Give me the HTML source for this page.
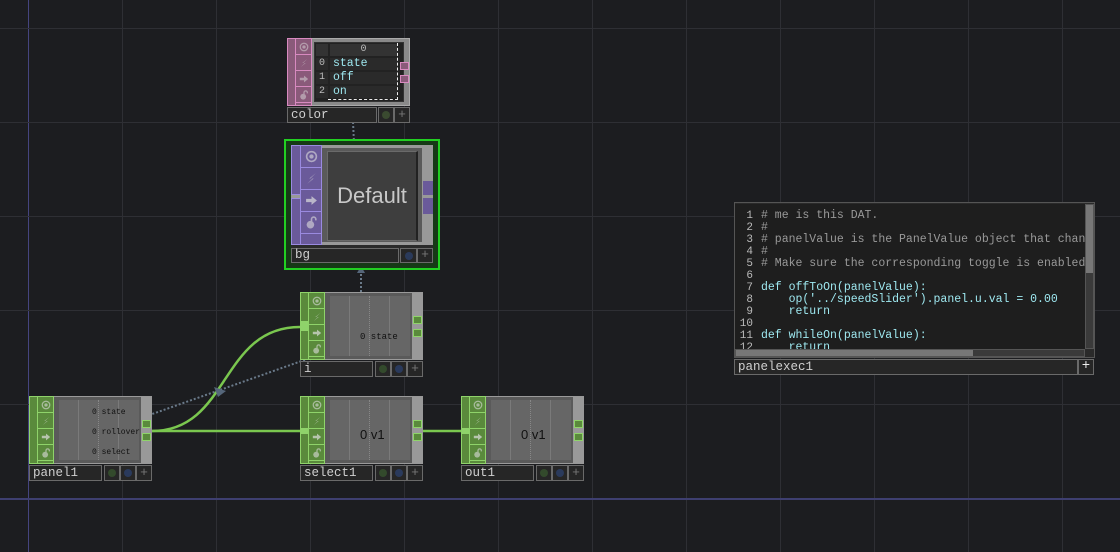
<!DOCTYPE html>
<html><head><meta charset="utf-8">
<style>
*{box-sizing:border-box;margin:0;padding:0}
body{width:1120px;height:552px;overflow:hidden;background:#1c1d20;position:relative;font-family:"Liberation Mono","DejaVu Sans Mono",monospace}
.gv{position:absolute;top:0;width:1px;height:552px;background:#2e2f34}
.gh{position:absolute;left:0;height:1px;width:1120px;background:#2e2f34}
.n{position:absolute;width:123px;height:86px}
.b{position:absolute;left:0;top:0;width:123px;height:68px;background:#5a5a5a;border:1px solid #9a9a9a}
.st{position:absolute;left:0;top:0;width:9px;height:68px;background:#5a8a3c;border:1px solid #8fd36a}
.ic{position:absolute;left:8px;top:0;width:17px;height:68px;background:#5a8a3c;border:1px solid #8fd36a}
.ic div{height:16px;border-bottom:1px solid #8fd36a;display:flex;align-items:center;justify-content:center}
.vw{position:absolute;left:30px;top:4px;width:80px;height:60px;background:#666}
.rs{position:absolute;left:112px;top:0;width:11px;height:68px;background:#999}
.con{position:absolute;left:113px;width:9px;height:8px;background:#5a8a3c;border:1px solid #8fd36a}
.lb{position:absolute;left:0;top:69px;width:73px;height:16px;background:#262626;border:1px solid #6a6a6a;color:#d0d0d0;font-size:12.5px;line-height:14px;padding-left:3px}
.bt{position:absolute;top:69px;width:16px;height:16px;background:#262626;border:1px solid #6a6a6a;color:#777;font-size:13px;line-height:13px;text-align:center}
.bt i{position:absolute;left:3px;top:3px;width:8px;height:8px;border-radius:50%}
.vl{position:absolute;top:0;width:1px;height:60px;background:#7a7a7a}
.dl{position:absolute;top:0;width:0;height:60px;border-left:1px dotted #888}
.txt{position:absolute;color:#111;font-size:8px;white-space:nowrap}
</style></head><body>
<svg width="0" height="0" style="position:absolute">
<defs>
<symbol id="i1" viewBox="0 0 12 12"><circle cx="6" cy="6" r="4.5" fill="none" stroke="#ddd" stroke-width="1.5"/><circle cx="6" cy="6" r="2" fill="#ddd"/></symbol>
<symbol id="i2" viewBox="0 0 12 12"><path d="M10 1 L4 6 L7 6 L2 11 L8 6 L5 6 Z" fill="#ddd"/></symbol>
<symbol id="i3" viewBox="0 0 12 12"><path d="M1 4.5 H6 V2 L11 6 L6 10 V7.5 H1 Z" fill="#ddd"/></symbol>
<symbol id="i4" viewBox="0 0 12 12"><circle cx="5" cy="8" r="3.5" fill="#ddd"/><path d="M6 5 V3 A2 2 0 0 1 10 3 V4" fill="none" stroke="#ddd" stroke-width="1.5"/></symbol>
</defs></svg>

<div class="gv" style="left:28px;background:#45457f"></div>
<div class="gv" style="left:122px"></div><div class="gv" style="left:216px"></div><div class="gv" style="left:310px"></div><div class="gv" style="left:404px"></div><div class="gv" style="left:498px"></div><div class="gv" style="left:592px"></div><div class="gv" style="left:686px"></div><div class="gv" style="left:780px"></div><div class="gv" style="left:874px"></div><div class="gv" style="left:968px"></div><div class="gv" style="left:1062px"></div>
<div class="gh" style="top:28px"></div><div class="gh" style="top:122px"></div><div class="gh" style="top:216px"></div><div class="gh" style="top:310px"></div><div class="gh" style="top:404px"></div><div class="gh" style="top:498px;height:2px;background:#3e3f70"></div>

<svg style="position:absolute;left:0;top:0" width="1120" height="552">
<path d="M152 431 L300 431" stroke="#7ac74f" stroke-width="2.5" fill="none"/>
<path d="M422 431 L461 431" stroke="#7ac74f" stroke-width="2.5" fill="none"/>
<path d="M152 431 C230 431, 220 327, 300 327" stroke="#7ac74f" stroke-width="2.5" fill="none"/>
<path d="M141 418 L310 358" stroke="#6a7a8a" stroke-width="2" stroke-dasharray="2 2" fill="none"/>
<path d="M214 387 L226 391 L218 397 Z" fill="#55667a"/>
<path d="M353 122 L354 143" stroke="#6a7a8a" stroke-width="2" stroke-dasharray="2 2" fill="none"/>
<path d="M349 139 L358 139 L354 146 Z" fill="#55667a"/>
<path d="M361 262 L361 292" stroke="#6a7a8a" stroke-width="2" stroke-dasharray="2 2" fill="none"/>
<path d="M357 273 L365 273 L361 266 Z" fill="#55667a"/>
</svg>

<!-- color DAT -->
<div class="n" style="left:287px;top:38px">
 <div class="b" style="height:68px;background:#8a8a8a;border-color:#aaa"></div>
 <div class="st" style="background:#8a5a7a;border-color:#d88ac0"></div>
 <div class="ic" style="background:#8a5a7a;border-color:#d88ac0"><div style="border-color:#d88ac0"><svg width="10" height="10" style="opacity:.5"><use href="#i1"/></svg></div><div style="border-color:#d88ac0"><svg width="10" height="10" style="opacity:.5"><use href="#i2"/></svg></div><div style="border-color:#d88ac0"><svg width="10" height="10" style="opacity:.5"><use href="#i3"/></svg></div><div style="border-color:#d88ac0"><svg width="10" height="10" style="opacity:.5"><use href="#i4"/></svg></div></div>
 <div style="position:absolute;left:27px;top:4px;width:90px;height:60px;background:#222;border:1px solid #333"></div>
 <div style="position:absolute;left:29px;top:6px;width:12px;height:12px;background:#333"></div>
 <div style="position:absolute;left:43px;top:6px;width:67px;height:12px;background:#333;color:#bbb;font-size:10px;text-align:center;line-height:12px">0</div>
 <div style="position:absolute;left:29px;top:20px;width:12px;height:12px;background:#2a2a2a;color:#bbb;font-size:10px;text-align:center;line-height:12px">0</div>
 <div style="position:absolute;left:43px;top:20px;width:67px;height:12px;background:#2a2a2a;color:#9ee8f0;font-size:11.5px;line-height:12px;padding-left:3px">state</div>
 <div style="position:absolute;left:29px;top:34px;width:12px;height:12px;background:#2a2a2a;color:#bbb;font-size:10px;text-align:center;line-height:12px">1</div>
 <div style="position:absolute;left:43px;top:34px;width:67px;height:12px;background:#2a2a2a;color:#9ee8f0;font-size:11.5px;line-height:12px;padding-left:3px">off</div>
 <div style="position:absolute;left:29px;top:48px;width:12px;height:12px;background:#2a2a2a;color:#bbb;font-size:10px;text-align:center;line-height:12px">2</div>
 <div style="position:absolute;left:43px;top:48px;width:67px;height:12px;background:#2a2a2a;color:#9ee8f0;font-size:11.5px;line-height:12px;padding-left:3px">on</div>
 <div style="position:absolute;left:41px;top:61px;width:70px;height:0;border-top:1px dashed #eee"></div>
 <div style="position:absolute;left:110px;top:5px;height:57px;width:0;border-left:1px dashed #eee"></div>
 <div class="con" style="top:24px;background:#8a5a7a;border-color:#d88ac0"></div>
 <div class="con" style="top:37px;background:#8a5a7a;border-color:#d88ac0"></div>
 <div class="lb" style="top:69px;width:90px">color</div>
 <div class="bt" style="left:91px"><i style="background:#3a4a30"></i></div>
 <div class="bt" style="left:107px">+</div>
</div>

<!-- bg COMP selected -->
<div style="position:absolute;left:284px;top:139px;width:156px;height:131px;border:2px solid #22d022;background:#163a16"></div>
<div style="position:absolute;left:291px;top:145px;width:142px;height:118px;background:#2a2a2a"></div>
<div style="position:absolute;left:291px;top:145px;width:142px;height:100px;background:#999"></div>
<div style="position:absolute;left:291px;top:145px;width:10px;height:50px;background:#6a5a9a;border:1px solid #9a8ae0"></div>
<div style="position:absolute;left:291px;top:198px;width:10px;height:47px;background:#6a5a9a;border:1px solid #9a8ae0"></div>
<div style="position:absolute;left:300px;top:145px;width:22px;height:100px;background:#6a5a9a;border:1px solid #9a8ae0">
 <div style="height:22px;border-bottom:1px solid #9a8ae0;display:flex;align-items:center;justify-content:center"><svg width="13" height="13" style="opacity:.6"><use href="#i1"/></svg></div>
 <div style="height:22px;border-bottom:1px solid #9a8ae0;display:flex;align-items:center;justify-content:center"><svg width="13" height="13" style="opacity:.6"><use href="#i2"/></svg></div>
 <div style="height:22px;border-bottom:1px solid #9a8ae0;display:flex;align-items:center;justify-content:center"><svg width="13" height="13" style="opacity:.7"><use href="#i3"/></svg></div>
 <div style="height:22px;border-bottom:1px solid #9a8ae0;display:flex;align-items:center;justify-content:center"><svg width="13" height="13" style="opacity:.6"><use href="#i4"/></svg></div>
</div>
<div style="position:absolute;left:322px;top:148px;width:100px;height:94px;background:#5a5a5a"></div>
<div style="position:absolute;left:327px;top:151px;width:91px;height:90px;background:#3e3e3e;border:1px solid #6a6a6a;border-right:2px solid #222;color:#c8c8c8;font-family:'Liberation Sans',sans-serif;font-size:22px;line-height:88px;text-align:center">Default</div>
<div style="position:absolute;left:423px;top:181px;width:10px;height:14px;background:#6a5a9a"></div>
<div style="position:absolute;left:423px;top:198px;width:10px;height:16px;background:#6a5a9a"></div>
<div style="position:absolute;left:291px;top:248px;width:108px;height:15px;background:#262626;border:1px solid #6a6a6a;color:#d0d0d0;font-size:12.5px;line-height:13px;padding-left:3px">bg</div>
<div style="position:absolute;left:400px;top:248px;width:17px;height:15px;background:#262626;border:1px solid #6a6a6a"><i style="position:absolute;left:4px;top:3px;width:8px;height:8px;border-radius:50%;background:#2a3a5a"></i></div>
<div style="position:absolute;left:417px;top:248px;width:16px;height:15px;background:#262626;border:1px solid #6a6a6a;color:#777;font-size:13px;line-height:12px;text-align:center">+</div>

<!-- i CHOP -->
<div class="n" style="left:300px;top:292px">
 <div class="b"></div><div class="st"></div>
 <div class="ic"><div><svg width="10" height="10" style="opacity:.6"><use href="#i1"/></svg></div><div><svg width="10" height="10" style="opacity:.6"><use href="#i2"/></svg></div><div><svg width="10" height="10" style="opacity:.7"><use href="#i3"/></svg></div><div><svg width="10" height="10" style="opacity:.6"><use href="#i4"/></svg></div></div>
 <div style="position:absolute;left:0;top:29px;width:9px;height:10px;background:#8fd36a"></div>
 <div class="vw"><div class="vl" style="left:19px"></div><div class="dl" style="left:39px"></div><div class="vl" style="left:59px"></div><div class="txt" style="left:30px;top:36px;font-size:9px">0 state</div></div>
 <div class="rs"></div><div class="con" style="top:24px"></div><div class="con" style="top:37px"></div>
 <div class="lb">i</div>
 <div class="bt" style="left:75px"><i style="background:#334a2c"></i></div><div class="bt" style="left:91px"><i style="background:#2a3a5c"></i></div><div class="bt" style="left:107px">+</div>
</div>

<!-- panel1 -->
<div class="n" style="left:29px;top:396px">
 <div class="b"></div><div class="st"></div>
 <div class="ic"><div><svg width="10" height="10" style="opacity:.6"><use href="#i1"/></svg></div><div><svg width="10" height="10" style="opacity:.6"><use href="#i2"/></svg></div><div><svg width="10" height="10" style="opacity:.7"><use href="#i3"/></svg></div><div><svg width="10" height="10" style="opacity:.6"><use href="#i4"/></svg></div></div>
 <div class="vw"><div class="vl" style="left:19px"></div><div class="dl" style="left:39px"></div><div class="vl" style="left:59px"></div>
 <div class="txt" style="left:33px;top:8px">0 state</div><div class="txt" style="left:33px;top:28px">0 rollover</div><div class="txt" style="left:33px;top:48px">0 select</div></div>
 <div class="rs"></div><div class="con" style="top:24px"></div><div class="con" style="top:37px"></div>
 <div class="lb">panel1</div>
 <div class="bt" style="left:75px"><i style="background:#334a2c"></i></div><div class="bt" style="left:91px"><i style="background:#2a3a5c"></i></div><div class="bt" style="left:107px">+</div>
</div>

<!-- select1 -->
<div class="n" style="left:300px;top:396px">
 <div class="b"></div><div class="st"></div>
 <div class="ic"><div><svg width="10" height="10" style="opacity:.6"><use href="#i1"/></svg></div><div><svg width="10" height="10" style="opacity:.6"><use href="#i2"/></svg></div><div><svg width="10" height="10" style="opacity:.7"><use href="#i3"/></svg></div><div><svg width="10" height="10" style="opacity:.6"><use href="#i4"/></svg></div></div>
 <div style="position:absolute;left:0;top:32px;width:9px;height:6px;background:#8fd36a"></div>
 <div class="vw"><div class="vl" style="left:19px"></div><div class="dl" style="left:39px"></div><div class="vl" style="left:59px"></div><div class="txt" style="left:30px;top:27px;font-size:13px;font-family:'Liberation Sans',sans-serif">0 v1</div></div>
 <div class="rs"></div><div class="con" style="top:24px"></div><div class="con" style="top:37px"></div>
 <div class="lb">select1</div>
 <div class="bt" style="left:75px"><i style="background:#334a2c"></i></div><div class="bt" style="left:91px"><i style="background:#2a3a5c"></i></div><div class="bt" style="left:107px">+</div>
</div>

<!-- out1 -->
<div class="n" style="left:461px;top:396px">
 <div class="b"></div><div class="st"></div>
 <div class="ic"><div><svg width="10" height="10" style="opacity:.6"><use href="#i1"/></svg></div><div><svg width="10" height="10" style="opacity:.6"><use href="#i2"/></svg></div><div><svg width="10" height="10" style="opacity:.7"><use href="#i3"/></svg></div><div><svg width="10" height="10" style="opacity:.6"><use href="#i4"/></svg></div></div>
 <div style="position:absolute;left:0;top:32px;width:9px;height:6px;background:#8fd36a"></div>
 <div class="vw"><div class="vl" style="left:19px"></div><div class="dl" style="left:39px"></div><div class="vl" style="left:59px"></div><div class="txt" style="left:30px;top:27px;font-size:13px;font-family:'Liberation Sans',sans-serif">0 v1</div></div>
 <div class="rs"></div><div class="con" style="top:24px"></div><div class="con" style="top:37px"></div>
 <div class="lb">out1</div>
 <div class="bt" style="left:75px"><i style="background:#334a2c"></i></div><div class="bt" style="left:91px"><i style="background:#2a3a5c"></i></div><div class="bt" style="left:107px">+</div>
</div>

<!-- panelexec1 DAT -->
<div style="position:absolute;left:734px;top:202px;width:361px;height:156px;background:#2a2a2a;border:1px solid #555"></div>
<div style="position:absolute;left:735px;top:204px;width:350px;height:145px;background:#1e1e1e;overflow:hidden;font-size:11.5px;line-height:12px;white-space:pre">
<div style="position:absolute;left:0;top:6px;width:18px;color:#bbb;text-align:right;font-size:11px">1
2
3
4
5
6
7
8
9
10
11
12</div>
<div style="position:absolute;left:26px;top:6px;color:#9ee8f0"><span style="color:#999"># me is this DAT.
#
# panelValue is the PanelValue object that changed
#
# Make sure the corresponding toggle is enabled</span>

def offToOn(panelValue):
    op('../speedSlider').panel.u.val = 0.00
    return

def whileOn(panelValue):
    return</div>
</div>
<div style="position:absolute;left:1085px;top:204px;width:9px;height:145px;background:#3a3a3a;border:1px solid #555"><div style="height:68px;background:#777"></div></div>
<div style="position:absolute;left:735px;top:349px;width:350px;height:8px;background:#3a3a3a;border:1px solid #555"><div style="width:237px;height:6px;background:#777"></div></div>
<div style="position:absolute;left:734px;top:359px;width:344px;height:16px;background:#262626;border:1px solid #6a6a6a;color:#d0d0d0;font-size:12.5px;line-height:14px;padding-left:3px">panelexec1</div>
<div style="position:absolute;left:1078px;top:359px;width:16px;height:16px;background:#262626;border:1px solid #6a6a6a;color:#eee;font-size:14px;line-height:13px;text-align:center">+</div>
</body></html>
